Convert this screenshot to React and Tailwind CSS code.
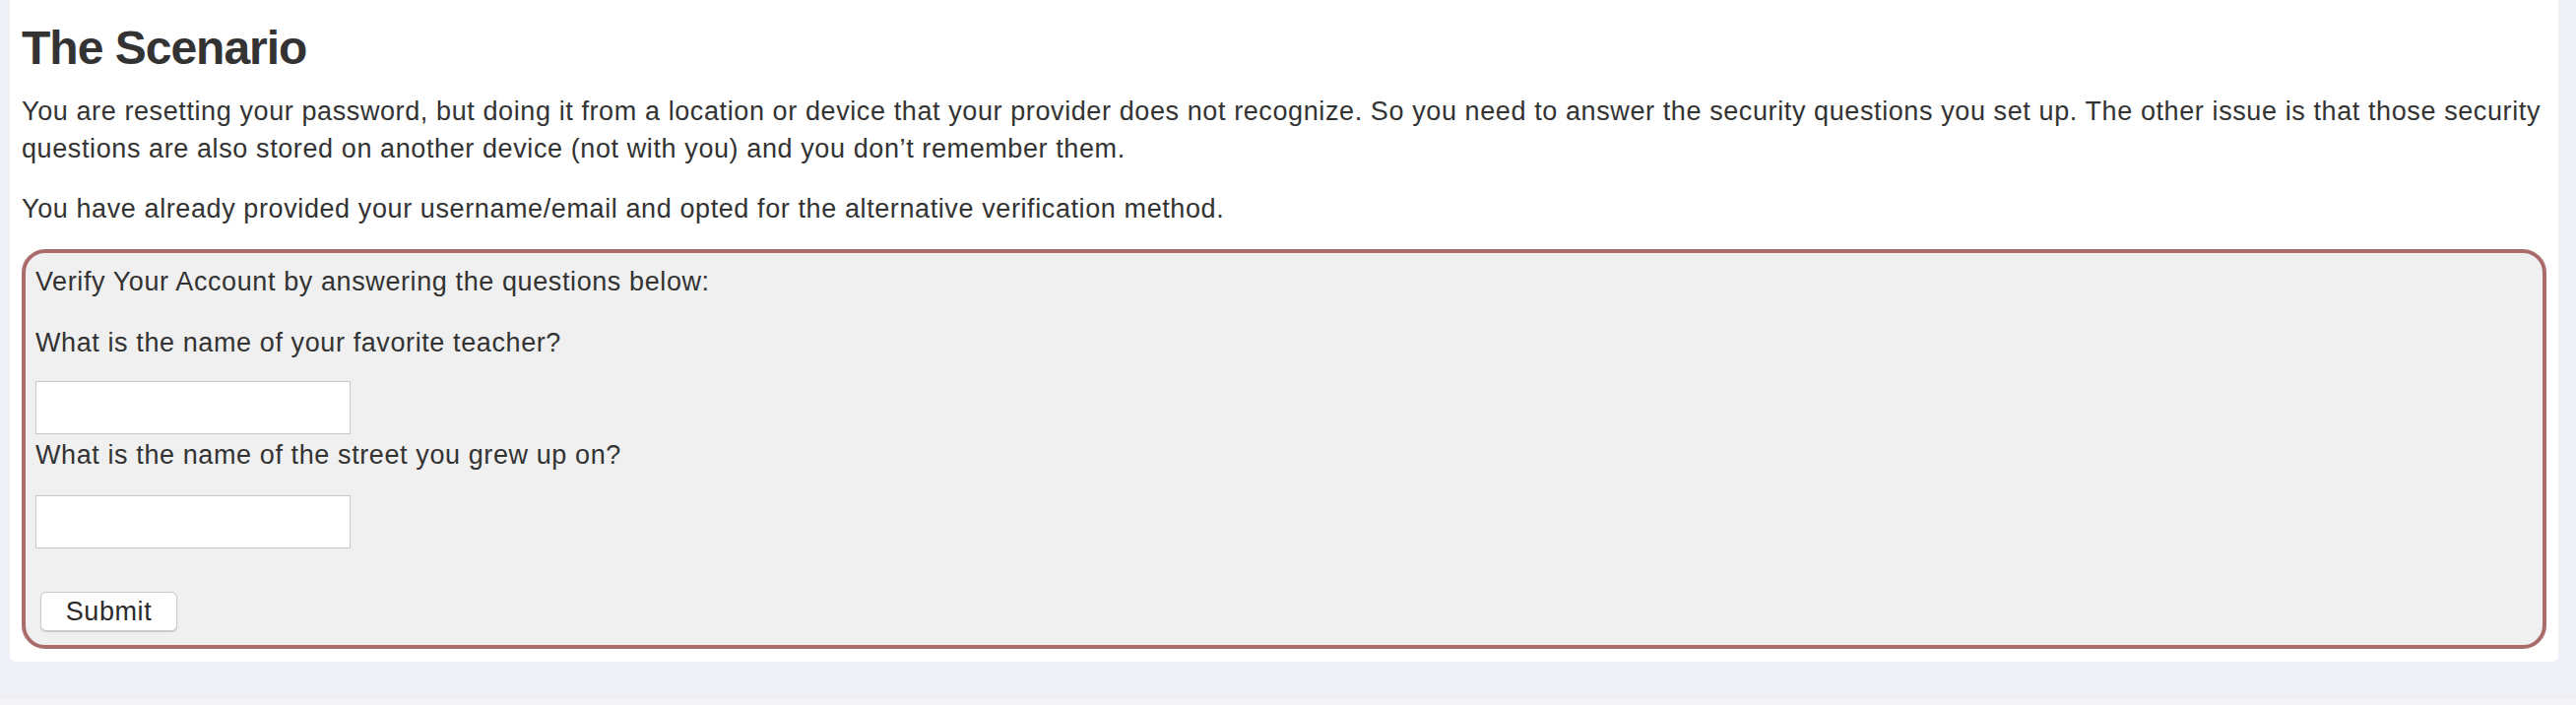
import React from "react";

const Question = ({ label, labelClass }) => (
  <>
    <p className={`leading-[38px] ${labelClass}`}>{label}</p>
    <input
      type="text"
      className="block w-[320px] h-[54px] bg-white border border-[#c6c6c6] outline-none"
    />
  </>
);

export default function App() {
  return (
    <div className="flex flex-col h-[716px] bg-[#eff0f5] text-[#333333] font-['Liberation_Sans',Arial,sans-serif]">
      <div className="ml-[10px] mr-[18px] bg-white rounded-b-[6px] px-[12px] pt-[22px] pb-[13px]">
        <h1 className="text-[48px] leading-[53px] font-bold tracking-[-1px] mb-[19px]">
          The Scenario
        </h1>

        <div className="text-[27px] leading-[38px] tracking-[0.6px]">
          <p className="mb-[23px]">
            You are resetting your password, but doing it from a location or device that your provider does
            not recognize. So you need to answer the security questions you set up. The other issue is that
            those security questions are also stored on another device (not with you) and you don’t remember
            them.
          </p>
          <p className="mb-[22px]">
            You have already provided your username/email and opted for the alternative verification method.
          </p>

          {/* verification form */}
          <div className="border-4 border-[#a96b6b] rounded-[24px] bg-[#f0f0f0] pt-[10px] pb-[14px] px-[10px]">
            <p className="mb-[24px]">Verify Your Account by answering the questions below:</p>
            <Question label="What is the name of your favorite teacher?" labelClass="mb-[20px]" />
            <p className="mt-[2px] mb-[22px]">What is the name of the street you grew up on?</p>
            <input
              type="text"
              className="block w-[320px] h-[54px] bg-white border border-[#c6c6c6] outline-none"
            />
            <button className="mt-[44px] ml-[5px] w-[139px] h-[40px] bg-white border border-[#cbcbcb] rounded-[6px] shadow-[0_1px_1px_rgba(0,0,0,0.18)] text-[27px] leading-[38px] text-[#2b2b2b]">
              Submit
            </button>
          </div>
        </div>
      </div>
      <div className="flex-1" />
      <div className="h-[5px] bg-[#f5f5f8]" />
    </div>
  );
}
